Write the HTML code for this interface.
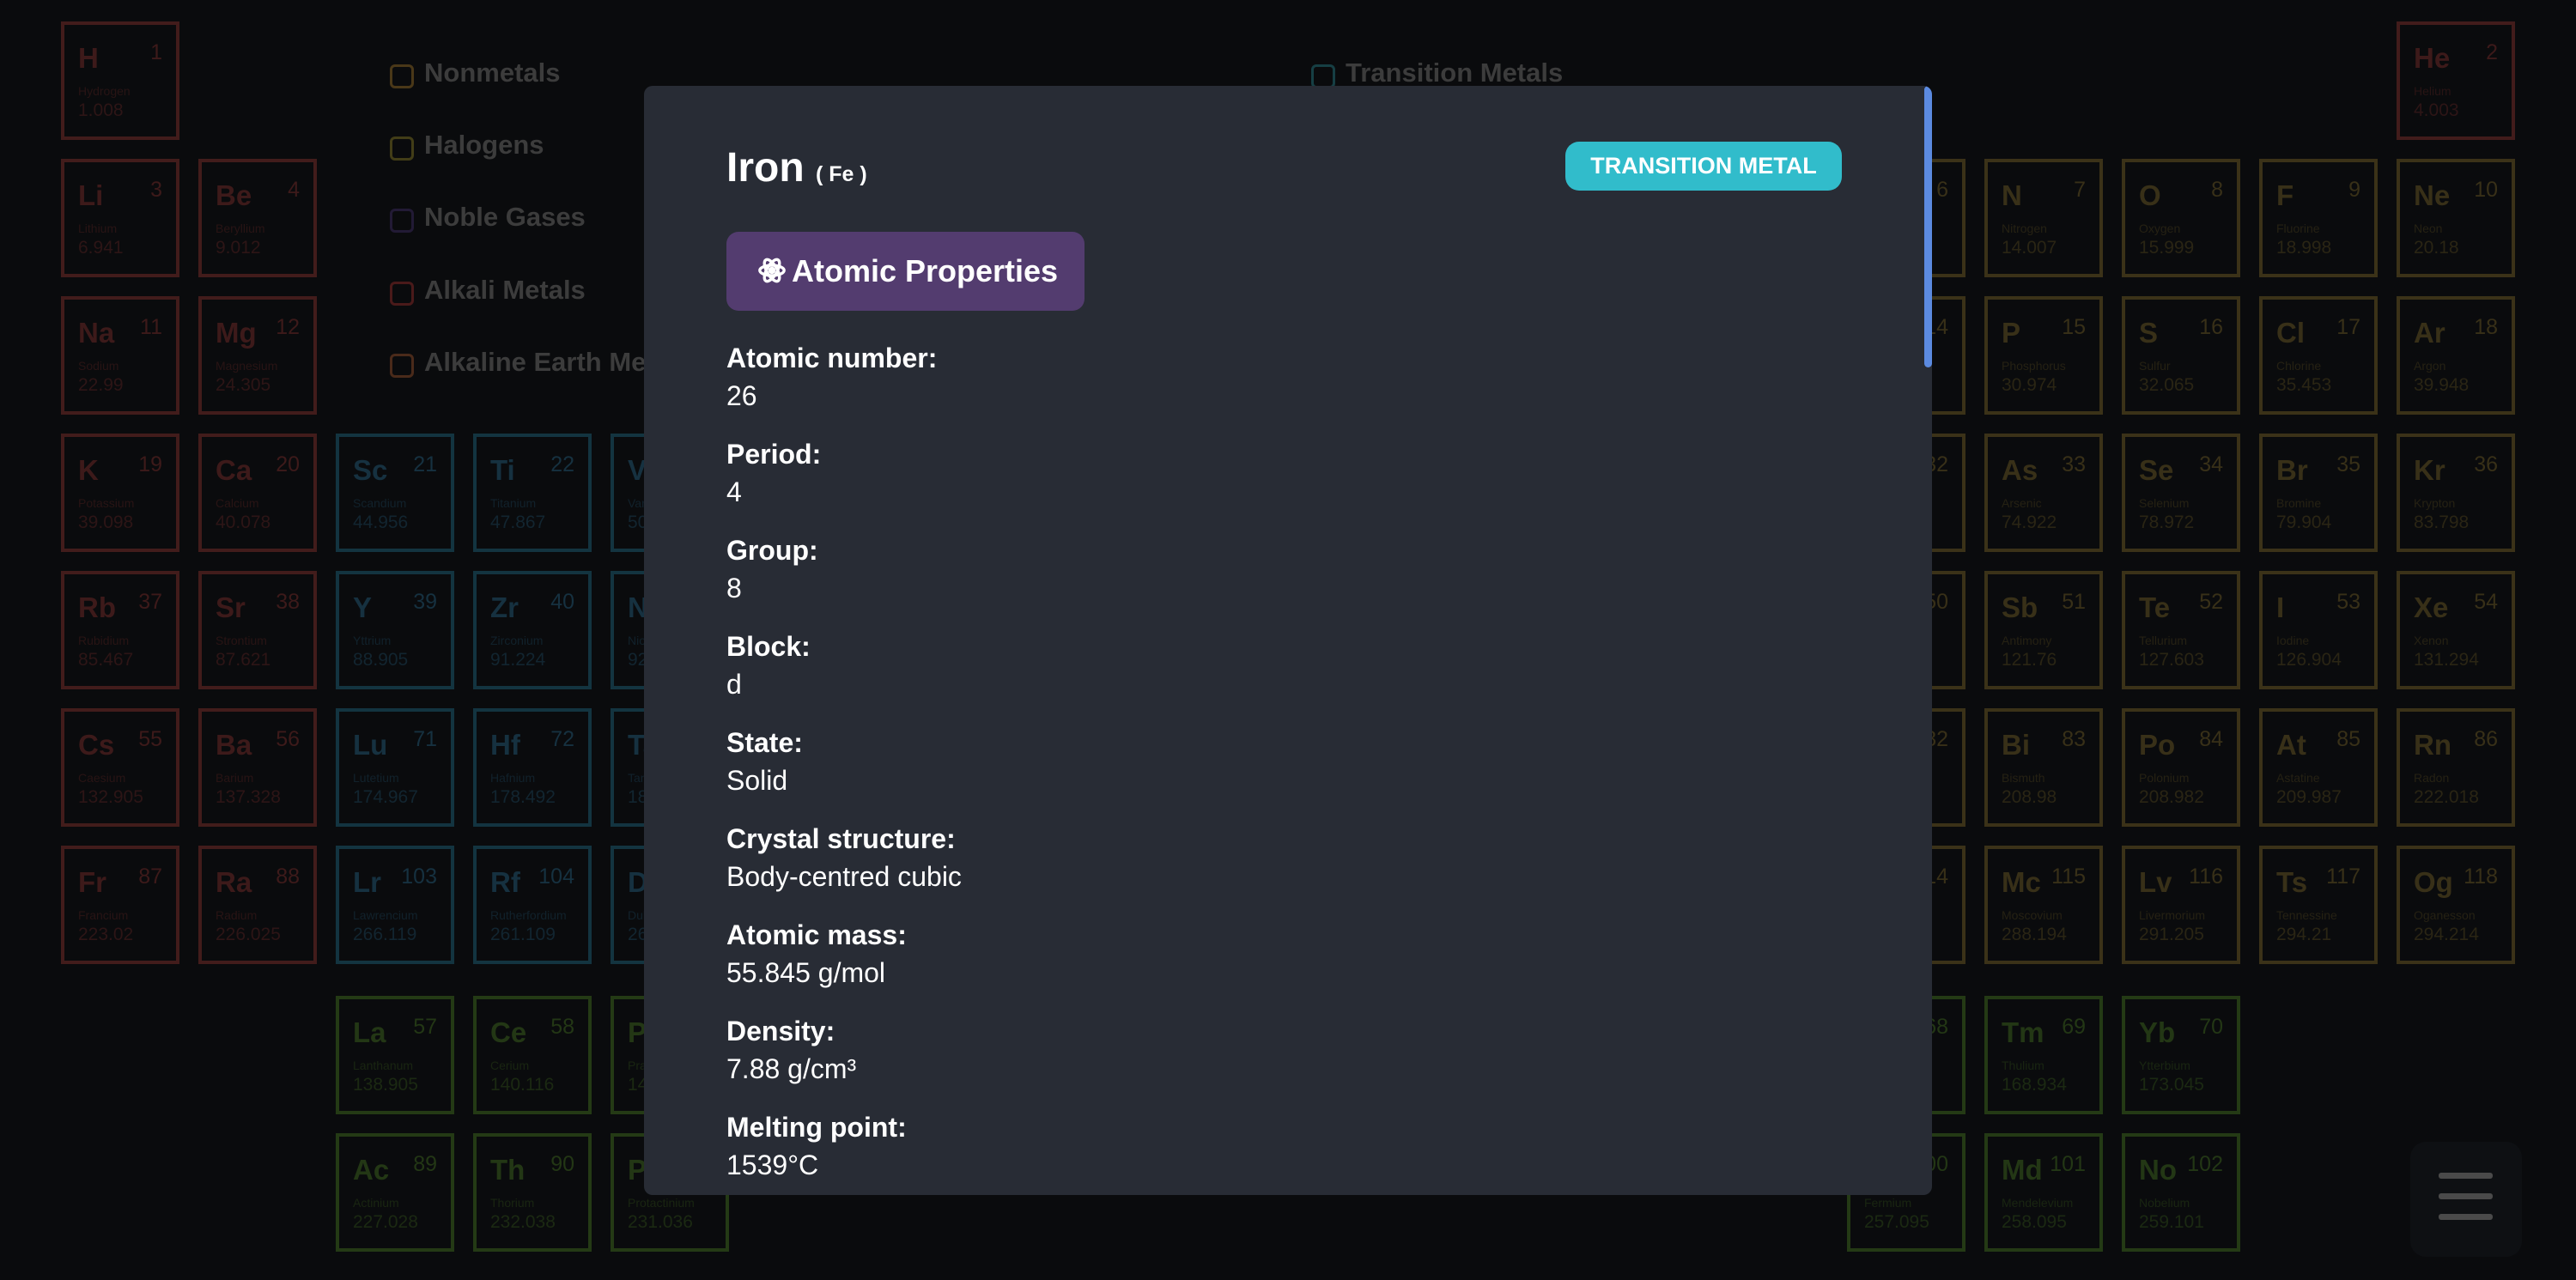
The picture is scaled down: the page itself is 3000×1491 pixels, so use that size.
<!DOCTYPE html>
<html><head><meta charset="utf-8"><style>
*{margin:0;padding:0;box-sizing:border-box}
html,body{width:3000px;height:1491px;overflow:hidden;background:#0a0b0d;font-family:"Liberation Sans",sans-serif}
.c{position:absolute;width:138px;height:138px;border:4px solid}
.c b{position:absolute;left:16px;top:22px;font-size:33px;font-weight:bold;line-height:1}
.c i{position:absolute;right:16px;top:20px;font-size:25px;font-style:normal;line-height:1}
.c s{position:absolute;left:16px;top:70px;font-size:14px;text-decoration:none;line-height:1;opacity:.6}
.c u{position:absolute;left:16px;top:89px;font-size:21px;text-decoration:none;line-height:1;opacity:.7}
.r{border-color:#421c1b;color:#3d1a1a}
.t{border-color:#133440;color:#163140}
.g{border-color:#3b3218;color:#383018}
.n{border-color:#243a15;color:#233715}
.lg{position:absolute;font-size:31px;font-weight:bold;color:#3c3c3c;line-height:1}
.lg:before{content:"";position:absolute;left:-40px;top:6px;width:22px;height:22px;border:3px solid var(--k);border-radius:6px}
.modal{position:absolute;left:750px;top:100px;width:1500px;height:1292px;background:#282c35;border-radius:10px;overflow:hidden;color:#fff}
.lab{position:absolute;left:96px;font-size:32px;font-weight:bold;line-height:1}
.val{position:absolute;left:96px;font-size:32px;line-height:1}
</style></head><body>

<div class="lg" style="left:494px;top:69px;--k:#4a3818">Nonmetals</div>
<div class="lg" style="left:494px;top:153px;--k:#423d17">Halogens</div>
<div class="lg" style="left:494px;top:237px;--k:#221a35">Noble Gases</div>
<div class="lg" style="left:494px;top:322px;--k:#4a1a1a">Alkali Metals</div>
<div class="lg" style="left:494px;top:406px;--k:#4a2a1a">Alkaline Earth Metals</div>
<div class="lg" style="left:1567px;top:69px;--k:#163f44">Transition Metals</div>

<div class="c r" style="left:71px;top:25px"><b>H</b><i>1</i><s>Hydrogen</s><u>1.008</u></div>
<div class="c r" style="left:2791px;top:25px"><b>He</b><i>2</i><s>Helium</s><u>4.003</u></div>

<div class="c r" style="left:71px;top:185px"><b>Li</b><i>3</i><s>Lithium</s><u>6.941</u></div>
<div class="c r" style="left:231px;top:185px"><b>Be</b><i>4</i><s>Beryllium</s><u>9.012</u></div>
<div class="c g" style="left:2151px;top:185px"><b>C</b><i>6</i><s>Carbon</s><u>12.011</u></div>
<div class="c g" style="left:2311px;top:185px"><b>N</b><i>7</i><s>Nitrogen</s><u>14.007</u></div>
<div class="c g" style="left:2471px;top:185px"><b>O</b><i>8</i><s>Oxygen</s><u>15.999</u></div>
<div class="c g" style="left:2631px;top:185px"><b>F</b><i>9</i><s>Fluorine</s><u>18.998</u></div>
<div class="c g" style="left:2791px;top:185px"><b>Ne</b><i>10</i><s>Neon</s><u>20.18</u></div>

<div class="c r" style="left:71px;top:345px"><b>Na</b><i>11</i><s>Sodium</s><u>22.99</u></div>
<div class="c r" style="left:231px;top:345px"><b>Mg</b><i>12</i><s>Magnesium</s><u>24.305</u></div>
<div class="c g" style="left:2151px;top:345px"><b>Si</b><i>14</i><s>Silicon</s><u>28.086</u></div>
<div class="c g" style="left:2311px;top:345px"><b>P</b><i>15</i><s>Phosphorus</s><u>30.974</u></div>
<div class="c g" style="left:2471px;top:345px"><b>S</b><i>16</i><s>Sulfur</s><u>32.065</u></div>
<div class="c g" style="left:2631px;top:345px"><b>Cl</b><i>17</i><s>Chlorine</s><u>35.453</u></div>
<div class="c g" style="left:2791px;top:345px"><b>Ar</b><i>18</i><s>Argon</s><u>39.948</u></div>

<div class="c r" style="left:71px;top:505px"><b>K</b><i>19</i><s>Potassium</s><u>39.098</u></div>
<div class="c r" style="left:231px;top:505px"><b>Ca</b><i>20</i><s>Calcium</s><u>40.078</u></div>
<div class="c t" style="left:391px;top:505px"><b>Sc</b><i>21</i><s>Scandium</s><u>44.956</u></div>
<div class="c t" style="left:551px;top:505px"><b>Ti</b><i>22</i><s>Titanium</s><u>47.867</u></div>
<div class="c t" style="left:711px;top:505px"><b>V</b><i>23</i><s>Vanadium</s><u>50.942</u></div>
<div class="c g" style="left:2151px;top:505px"><b>Ge</b><i>32</i><s>Germanium</s><u>72.63</u></div>
<div class="c g" style="left:2311px;top:505px"><b>As</b><i>33</i><s>Arsenic</s><u>74.922</u></div>
<div class="c g" style="left:2471px;top:505px"><b>Se</b><i>34</i><s>Selenium</s><u>78.972</u></div>
<div class="c g" style="left:2631px;top:505px"><b>Br</b><i>35</i><s>Bromine</s><u>79.904</u></div>
<div class="c g" style="left:2791px;top:505px"><b>Kr</b><i>36</i><s>Krypton</s><u>83.798</u></div>

<div class="c r" style="left:71px;top:665px"><b>Rb</b><i>37</i><s>Rubidium</s><u>85.467</u></div>
<div class="c r" style="left:231px;top:665px"><b>Sr</b><i>38</i><s>Strontium</s><u>87.621</u></div>
<div class="c t" style="left:391px;top:665px"><b>Y</b><i>39</i><s>Yttrium</s><u>88.905</u></div>
<div class="c t" style="left:551px;top:665px"><b>Zr</b><i>40</i><s>Zirconium</s><u>91.224</u></div>
<div class="c t" style="left:711px;top:665px"><b>Nb</b><i>41</i><s>Niobium</s><u>92.906</u></div>
<div class="c g" style="left:2151px;top:665px"><b>Sn</b><i>50</i><s>Tin</s><u>118.71</u></div>
<div class="c g" style="left:2311px;top:665px"><b>Sb</b><i>51</i><s>Antimony</s><u>121.76</u></div>
<div class="c g" style="left:2471px;top:665px"><b>Te</b><i>52</i><s>Tellurium</s><u>127.603</u></div>
<div class="c g" style="left:2631px;top:665px"><b>I</b><i>53</i><s>Iodine</s><u>126.904</u></div>
<div class="c g" style="left:2791px;top:665px"><b>Xe</b><i>54</i><s>Xenon</s><u>131.294</u></div>

<div class="c r" style="left:71px;top:825px"><b>Cs</b><i>55</i><s>Caesium</s><u>132.905</u></div>
<div class="c r" style="left:231px;top:825px"><b>Ba</b><i>56</i><s>Barium</s><u>137.328</u></div>
<div class="c t" style="left:391px;top:825px"><b>Lu</b><i>71</i><s>Lutetium</s><u>174.967</u></div>
<div class="c t" style="left:551px;top:825px"><b>Hf</b><i>72</i><s>Hafnium</s><u>178.492</u></div>
<div class="c t" style="left:711px;top:825px"><b>Ta</b><i>73</i><s>Tantalum</s><u>180.948</u></div>
<div class="c g" style="left:2151px;top:825px"><b>Pb</b><i>82</i><s>Lead</s><u>207.2</u></div>
<div class="c g" style="left:2311px;top:825px"><b>Bi</b><i>83</i><s>Bismuth</s><u>208.98</u></div>
<div class="c g" style="left:2471px;top:825px"><b>Po</b><i>84</i><s>Polonium</s><u>208.982</u></div>
<div class="c g" style="left:2631px;top:825px"><b>At</b><i>85</i><s>Astatine</s><u>209.987</u></div>
<div class="c g" style="left:2791px;top:825px"><b>Rn</b><i>86</i><s>Radon</s><u>222.018</u></div>

<div class="c r" style="left:71px;top:985px"><b>Fr</b><i>87</i><s>Francium</s><u>223.02</u></div>
<div class="c r" style="left:231px;top:985px"><b>Ra</b><i>88</i><s>Radium</s><u>226.025</u></div>
<div class="c t" style="left:391px;top:985px"><b>Lr</b><i>103</i><s>Lawrencium</s><u>266.119</u></div>
<div class="c t" style="left:551px;top:985px"><b>Rf</b><i>104</i><s>Rutherfordium</s><u>261.109</u></div>
<div class="c t" style="left:711px;top:985px"><b>Db</b><i>105</i><s>Dubnium</s><u>262.114</u></div>
<div class="c g" style="left:2151px;top:985px"><b>Fl</b><i>114</i><s>Flerovium</s><u>289.19</u></div>
<div class="c g" style="left:2311px;top:985px"><b>Mc</b><i>115</i><s>Moscovium</s><u>288.194</u></div>
<div class="c g" style="left:2471px;top:985px"><b>Lv</b><i>116</i><s>Livermorium</s><u>291.205</u></div>
<div class="c g" style="left:2631px;top:985px"><b>Ts</b><i>117</i><s>Tennessine</s><u>294.21</u></div>
<div class="c g" style="left:2791px;top:985px"><b>Og</b><i>118</i><s>Oganesson</s><u>294.214</u></div>

<div class="c n" style="left:391px;top:1160px"><b>La</b><i>57</i><s>Lanthanum</s><u>138.905</u></div>
<div class="c n" style="left:551px;top:1160px"><b>Ce</b><i>58</i><s>Cerium</s><u>140.116</u></div>
<div class="c n" style="left:711px;top:1160px"><b>Pr</b><i>59</i><s>Praseodymium</s><u>140.908</u></div>
<div class="c n" style="left:2151px;top:1160px"><b>Er</b><i>68</i><s>Erbium</s><u>167.259</u></div>
<div class="c n" style="left:2311px;top:1160px"><b>Tm</b><i>69</i><s>Thulium</s><u>168.934</u></div>
<div class="c n" style="left:2471px;top:1160px"><b>Yb</b><i>70</i><s>Ytterbium</s><u>173.045</u></div>

<div class="c n" style="left:391px;top:1320px"><b>Ac</b><i>89</i><s>Actinium</s><u>227.028</u></div>
<div class="c n" style="left:551px;top:1320px"><b>Th</b><i>90</i><s>Thorium</s><u>232.038</u></div>
<div class="c n" style="left:711px;top:1320px"><b>Pa</b><i>91</i><s>Protactinium</s><u>231.036</u></div>
<div class="c n" style="left:2151px;top:1320px"><b>Fm</b><i>100</i><s>Fermium</s><u>257.095</u></div>
<div class="c n" style="left:2311px;top:1320px"><b>Md</b><i>101</i><s>Mendelevium</s><u>258.095</u></div>
<div class="c n" style="left:2471px;top:1320px"><b>No</b><i>102</i><s>Nobelium</s><u>259.101</u></div>

<div style="position:absolute;left:2807px;top:1330px;width:130px;height:134px;background:#0e1013;border-radius:18px">
<div style="position:absolute;left:33px;top:36px;width:63px;height:7px;background:#4a4a4a;border-radius:3px"></div>
<div style="position:absolute;left:33px;top:60px;width:63px;height:7px;background:#4a4a4a;border-radius:3px"></div>
<div style="position:absolute;left:33px;top:84px;width:63px;height:7px;background:#4a4a4a;border-radius:3px"></div>
</div>

<div class="modal">
<div style="position:absolute;right:0;top:0;width:9px;height:328px;background:#5b8ae0;border-radius:5px"></div>
<div style="position:absolute;left:96px;top:72px;font-size:48px;font-weight:bold;line-height:1">Iron <span style="font-size:25px">( Fe )</span></div>
<div style="position:absolute;left:1073px;top:65px;width:322px;height:57px;background:#31bccb;border-radius:16px;font-size:27px;font-weight:bold;line-height:57px;text-align:center">TRANSITION METAL</div>
<div style="position:absolute;left:96px;top:170px;width:417px;height:92px;background:#533c6f;border-radius:14px;font-size:36px;font-weight:bold;line-height:92px;padding-left:36px">
<svg width="34" height="34" viewBox="0 0 24 24" style="vertical-align:-4px;margin-right:6px" fill="none" stroke="#fff" stroke-width="2.4"><ellipse cx="12" cy="12" rx="10" ry="4.2"/><ellipse cx="12" cy="12" rx="10" ry="4.2" transform="rotate(60 12 12)"/><ellipse cx="12" cy="12" rx="10" ry="4.2" transform="rotate(120 12 12)"/><circle cx="12" cy="12" r="1.8" fill="#fff"/></svg>Atomic Properties</div>

<div class="lab" style="top:301px">Atomic number:</div><div class="val" style="top:345px">26</div>
<div class="lab" style="top:413px">Period:</div><div class="val" style="top:457px">4</div>
<div class="lab" style="top:525px">Group:</div><div class="val" style="top:569px">8</div>
<div class="lab" style="top:637px">Block:</div><div class="val" style="top:681px">d</div>
<div class="lab" style="top:749px">State:</div><div class="val" style="top:793px">Solid</div>
<div class="lab" style="top:861px">Crystal structure:</div><div class="val" style="top:905px">Body-centred cubic</div>
<div class="lab" style="top:973px">Atomic mass:</div><div class="val" style="top:1017px">55.845 g/mol</div>
<div class="lab" style="top:1085px">Density:</div><div class="val" style="top:1129px">7.88 g/cm³</div>
<div class="lab" style="top:1197px">Melting point:</div><div class="val" style="top:1241px">1539°C</div>
</div>
</body></html>
